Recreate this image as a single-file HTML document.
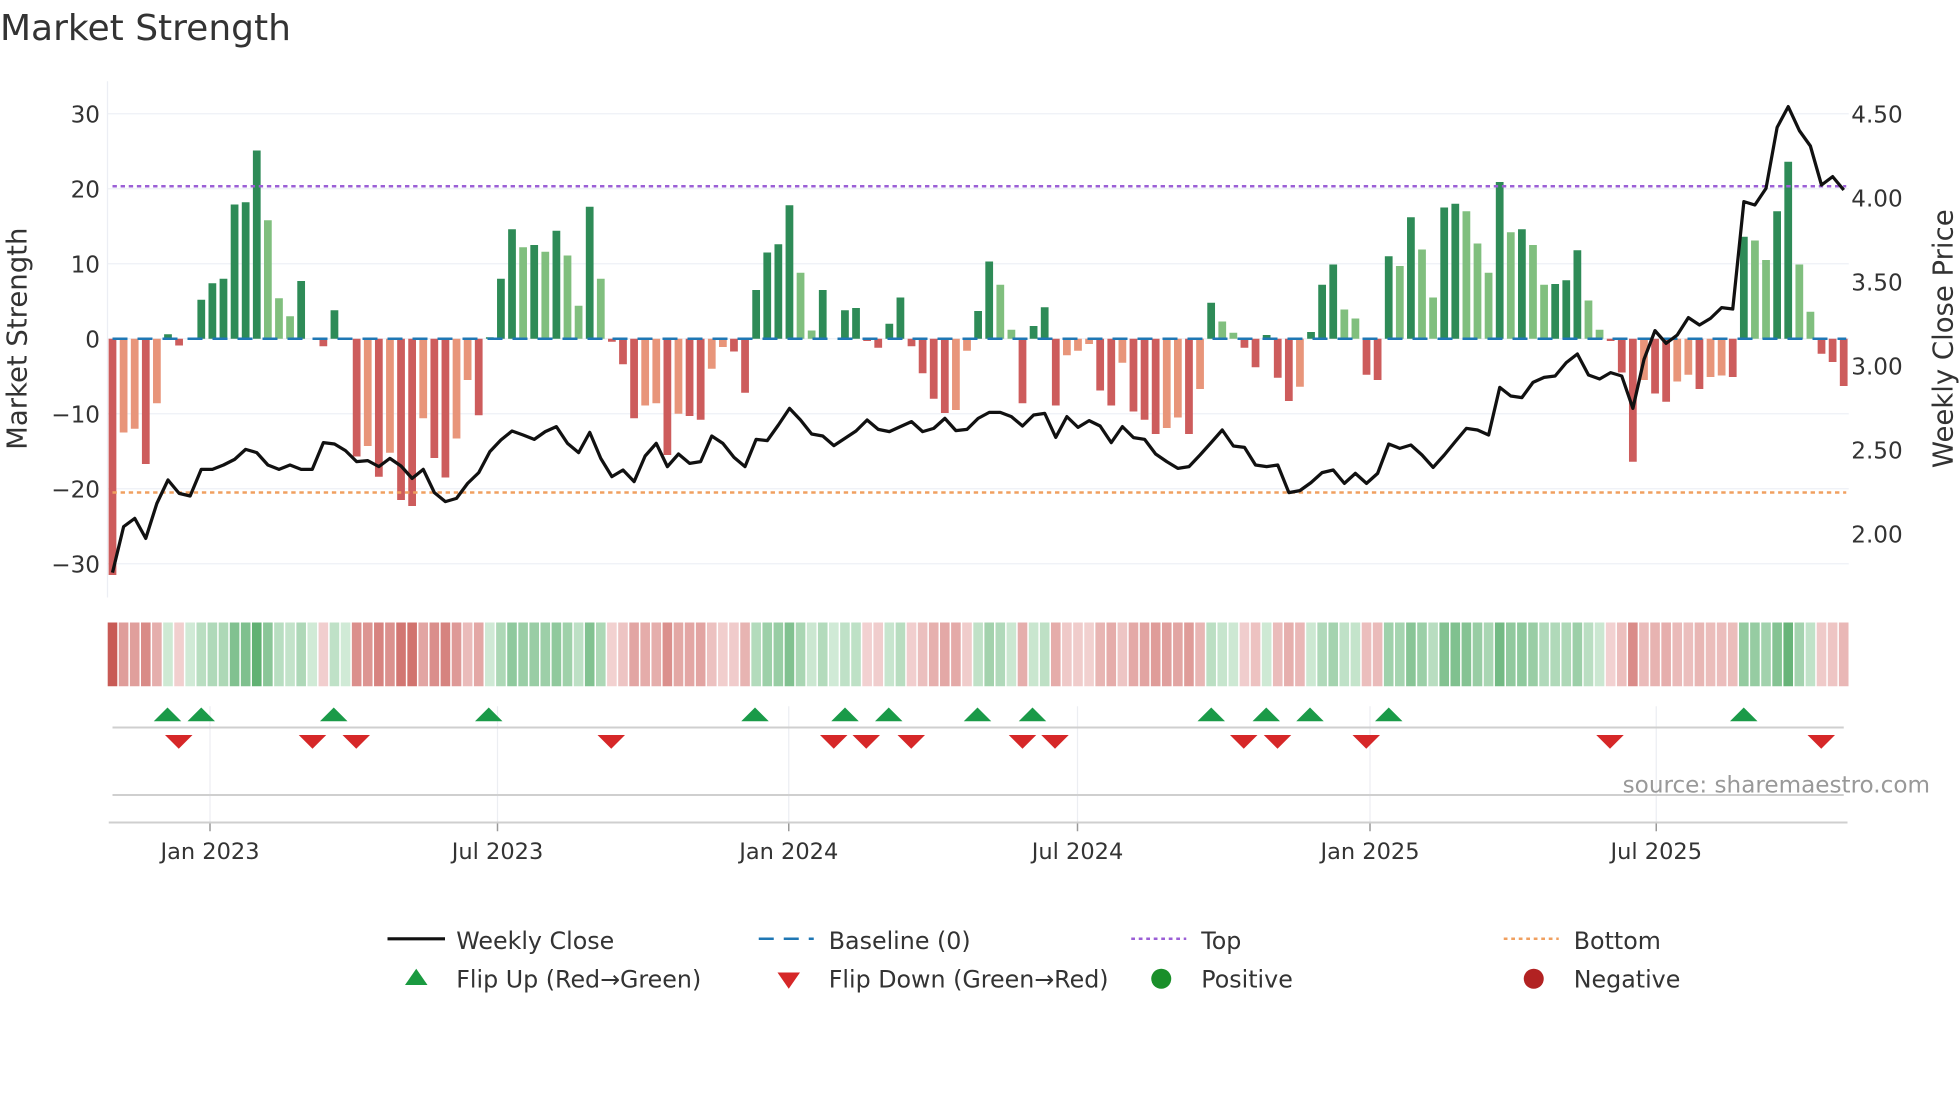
<!DOCTYPE html>
<html><head><meta charset="utf-8"><style>
html,body{margin:0;padding:0;background:#fff;width:1960px;height:1102px;overflow:hidden}
svg{display:block;font-family:"DejaVu Sans","Liberation Sans",sans-serif}
</style></head><body>
<svg id="s" width="1960" height="1102" viewBox="0 0 1568 881.6" xmlns="http://www.w3.org/2000/svg">
<rect width="1568" height="882" fill="#fff"/>
<text x="0" y="32" font-size="28.8" fill="#333">Market Strength</text>
<g id="grid"></g>
<g id="bars"></g>
<g id="lines"></g>
<g id="strip"></g>
<g id="marks"></g>
<text x="1544" y="634" font-size="18.5" fill="#999" text-anchor="end">source: sharemaestro.com</text>
<text transform="translate(21,271) rotate(-90)" font-size="22" fill="#333" text-anchor="middle">Market Strength</text>
<text transform="translate(1562,271) rotate(-90)" font-size="22" fill="#333" text-anchor="middle">Weekly Close Price</text>
<g font-size="19" fill="#333">
<line x1="310" y1="751" x2="356" y2="751" stroke="#111" stroke-width="2.5"/><text x="365" y="759">Weekly Close</text>
<line x1="607" y1="751" x2="651" y2="751" stroke="#1f77b4" stroke-width="2" stroke-dasharray="12,8"/><text x="663" y="759">Baseline (0)</text>
<line x1="905" y1="751" x2="949" y2="751" stroke="#9b5fd6" stroke-width="2" stroke-dasharray="3,3"/><text x="961" y="759">Top</text>
<line x1="1203" y1="751" x2="1247" y2="751" stroke="#f0a060" stroke-width="2" stroke-dasharray="3,3"/><text x="1259" y="759">Bottom</text>
<polygon points="324,788 342,788 333,775" fill="#1a9a40"/><text x="365" y="790">Flip Up (Red→Green)</text>
<polygon points="622,778 640,778 631,791" fill="#d62728"/><text x="663" y="790">Flip Down (Green→Red)</text>
<circle cx="929" cy="783" r="8" fill="#1a8f2a"/><text x="961" y="790">Positive</text>
<circle cx="1227" cy="783" r="8" fill="#b22222"/><text x="1259" y="790">Negative</text>
</g>
</svg>
<script>
var NS="http://www.w3.org/2000/svg";
function el(p,t,a,txt){var e=document.createElementNS(NS,t);for(var k in a)e.setAttribute(k,a[k]);if(txt!==undefined)e.textContent=txt;document.getElementById(p).appendChild(e);return e;}
var V=[[-31.5,1],[-12.5,0],[-12,0],[-16.7,1],[-8.6,0],[0.6,1],[-0.9,1],[0,1],[5.2,1],[7.4,1],[8,1],[17.9,1],[18.2,1],[25.1,1],[15.8,0],[5.4,0],[3,0],[7.7,1],[0,1],[-1,1],[3.8,1],[0,1],[-15.7,1],[-14.3,0],[-18.4,1],[-15.2,0],[-21.5,1],[-22.3,1],[-10.6,0],[-15.9,1],[-18.5,1],[-13.3,0],[-5.5,0],[-10.2,1],[0.2,1],[8,1],[14.6,1],[12.2,0],[12.5,1],[11.6,0],[14.4,1],[11.1,0],[4.4,0],[17.6,1],[8,0],[-0.4,1],[-3.4,1],[-10.6,1],[-8.9,0],[-8.6,0],[-15.5,1],[-10,0],[-10.3,1],[-10.8,1],[-4,0],[-1.1,0],[-1.7,1],[-7.2,1],[6.5,1],[11.5,1],[12.6,1],[17.8,1],[8.8,0],[1.1,0],[6.5,1],[0,1],[3.8,1],[4.1,1],[-0.3,1],[-1.2,1],[2,1],[5.5,1],[-1,1],[-4.6,1],[-8,1],[-9.9,1],[-9.5,0],[-1.6,0],[3.7,1],[10.3,1],[7.2,0],[1.2,0],[-8.6,1],[1.7,1],[4.2,1],[-8.9,1],[-2.2,0],[-1.6,0],[-0.7,0],[-6.9,1],[-8.9,1],[-3.2,0],[-9.7,1],[-10.8,1],[-12.7,1],[-11.9,0],[-10.5,0],[-12.7,1],[-6.7,0],[4.8,1],[2.3,0],[0.8,0],[-1.2,1],[-3.8,1],[0.5,1],[-5.2,1],[-8.3,1],[-6.4,0],[0.9,1],[7.2,1],[9.9,1],[3.9,0],[2.7,0],[-4.8,1],[-5.5,1],[11,1],[9.7,0],[16.2,1],[11.9,0],[5.5,0],[17.5,1],[18,1],[17,0],[12.7,0],[8.8,0],[20.9,1],[14.2,0],[14.6,1],[12.5,0],[7.2,0],[7.3,1],[7.8,1],[11.8,1],[5.1,0],[1.2,0],[-0.3,1],[-4.5,1],[-16.4,1],[-5.5,0],[-7.3,1],[-8.4,1],[-5.7,0],[-4.8,0],[-6.7,1],[-5.1,0],[-4.9,0],[-5.1,1],[13.6,1],[13.1,0],[10.5,0],[17,1],[23.6,1],[9.9,0],[3.6,0],[-2,1],[-3.1,1],[-6.3,1]];
var Z2=[1418,1280,1255,1315,1210,1140,1180,1188,1108,1108,1095,1078,1048,1058,1095,1108,1095,1108,1108,1028,1032,1052,1085,1082,1100,1075,1098,1135,1108,1178,1205,1195,1150,1118,1055,1020,993,1005,1018,995,980];
var Z3=[1030,1058,997,1075,1130,1110,1145,1068,1030,1100,1062,1090,1085,1008,1030,1072,1100,1018,1022,975,925,960,1002,1008,1037,1015,993,960,988,995,980,965,995,985,955,992,988,955,937,937,950,978,945];
var Z4=[1012,950,982,962,978,1028,980,1013,1018,1062,1085,1105,1100,1065,1028,990,1038,1042,1095,1100,1095,1178,1172,1148,1118,1110,1150,1120,1150,1120,1032,1045,1035,1065,1102,1065,1025,985,990,1005,862,888,893,847];
var Z5=[862,858,818,792,855,867,848,858,955,808,722,760,735,683,705,685,653,657,335,345,295,112,50,122,168,285,260,300];
var P=[];Z2.forEach(function(z){P.push(80+z/3.75)});Z3.forEach(function(z){P.push(80+z/3.75)});
P.push(80+940/3.75);Z4.forEach(function(z){P.push(80+z/3.75)});Z5.forEach(function(z){P.push(72+z/3.75)});
var X0=90,DX=8.878,Y0=271,K=6;
function X(i){return X0+DX*i}
[30,20,10,0,-10,-20,-30].forEach(function(v){var y=Y0-v*K;el("grid","line",{x1:86,y1:y,x2:1479,y2:y,stroke:"#eef0f6","stroke-width":1});el("grid","text",{x:80,y:y+7,"font-size":18.5,fill:"#333","text-anchor":"end"},(v<0?"\u2212"+(-v):""+v));});
[["4.50",91],["4.00",158.2],["3.50",225.4],["3.00",292.6],["2.50",359.8],["2.00",427]].forEach(function(a){el("grid","text",{x:1481,y:a[1]+7,"font-size":18.5,fill:"#333"},a[0]);});
el("grid","line",{x1:86,y1:65,x2:86,y2:478,stroke:"#eceef4"});
var W=6.2;
V.forEach(function(d,i){var v=d[0],x=X(i);var c=v>=0?(d[1]?"#2e8b57":"#80bf7e"):(d[1]?"#cd5c5c":"#e8957a");
 var h=Math.abs(v)*K;if(h>0.5)el("bars","rect",{x:x-W/2,y:v>=0?Y0-h:Y0,width:W,height:h,fill:c});});
el("lines","line",{x1:90,y1:Y0,x2:1477,y2:Y0,stroke:"#1f77b4","stroke-width":2,"stroke-dasharray":"12,8"});
el("lines","line",{x1:90,y1:149,x2:1477,y2:149,stroke:"#9b5fd6","stroke-width":2,"stroke-dasharray":"3.5,3"});
el("lines","line",{x1:90,y1:394,x2:1477,y2:394,stroke:"#f0a060","stroke-width":2,"stroke-dasharray":"3.5,3"});
var pts=P.map(function(y,i){return X(i).toFixed(1)+","+y.toFixed(1)}).join(" ");
el("lines","polyline",{points:pts,fill:"none",stroke:"#111","stroke-width":2.6,"stroke-linejoin":"round"});
function mix(a,b,t){return "rgb("+a.map(function(x,k){return Math.round(x+(b[k]-x)*t)}).join(",")+")"}
V.forEach(function(d,i){var v=d[0];var t=Math.min(Math.abs(v)/28,1);t=0.1+0.9*t;
 var c=v>=0?mix([222,241,226],[84,170,104],t):mix([247,224,224],[200,90,85],t);
 el("strip","rect",{x:X(i)-DX/2+0.6,y:498,width:DX-1.2,height:51,fill:c});});
[168,398,631,862,1096,1325].forEach(function(x){el("marks","line",{x1:x,y1:565,x2:x,y2:658,stroke:"#eceef2"});el("marks","line",{x1:x,y1:658,x2:x,y2:665,stroke:"#999","stroke-width":1.2});});
el("marks","line",{x1:90,y1:582,x2:1475,y2:582,stroke:"#cfcfcf","stroke-width":1.6});
el("marks","line",{x1:90,y1:636,x2:1475,y2:636,stroke:"#cfcfcf","stroke-width":1.6});
el("marks","line",{x1:87,y1:658,x2:1478,y2:658,stroke:"#cfcfcf","stroke-width":1.6});
[["Jan 2023",168],["Jul 2023",398],["Jan 2024",631],["Jul 2024",862],["Jan 2025",1096],["Jul 2025",1325]].forEach(function(a){el("marks","text",{x:a[1],y:687,"font-size":18,fill:"#333","text-anchor":"middle"},a[0]);});
[134,161,267,391,604,676,711,782,826,969,1013,1048,1111,1395].forEach(function(x){el("marks","polygon",{points:(x-11)+",577 "+(x+11)+",577 "+x+",566",fill:"#1a9a48"});});
[143,250,285,489,667,693,729,818,844,995,1022,1093,1288,1457].forEach(function(x){el("marks","polygon",{points:(x-11)+",588 "+(x+11)+",588 "+x+",599",fill:"#d62728"});});
</script>
</body></html>
